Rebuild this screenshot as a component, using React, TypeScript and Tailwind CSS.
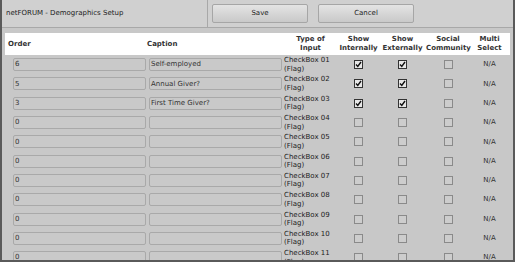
import React from 'react'

type Row = {
  order: string
  caption: string
  type: string
  internal: boolean
  external: boolean
}

const rows: Row[] = [
  { order: '6', caption: 'Self-employed', type: 'CheckBox 01', internal: true, external: true },
  { order: '5', caption: 'Annual Giver?', type: 'CheckBox 02', internal: true, external: true },
  { order: '3', caption: 'First Time Giver?', type: 'CheckBox 03', internal: true, external: true },
  { order: '0', caption: '', type: 'CheckBox 04', internal: false, external: false },
  { order: '0', caption: '', type: 'CheckBox 05', internal: false, external: false },
  { order: '0', caption: '', type: 'CheckBox 06', internal: false, external: false },
  { order: '0', caption: '', type: 'CheckBox 07', internal: false, external: false },
  { order: '0', caption: '', type: 'CheckBox 08', internal: false, external: false },
  { order: '0', caption: '', type: 'CheckBox 09', internal: false, external: false },
  { order: '0', caption: '', type: 'CheckBox 10', internal: false, external: false },
  { order: '0', caption: '', type: 'CheckBox 11', internal: false, external: false },
]

function Box({ checked }: { checked: boolean }) {
  if (checked) {
    return (
      <span className="flex h-[9px] w-[9px] items-center justify-center border border-[#333] bg-[#e8e8e8]">
        <svg width="7" height="7" viewBox="0 0 7 7">
          <path d="M1 3.5 L2.8 5.5 L6 1" fill="none" stroke="#111" strokeWidth="1.4" />
        </svg>
      </span>
    )
  }
  return <span className="block h-[9px] w-[9px] border border-[#8a8a8a] bg-[#cdcdcd]" />
}

function Field({ value }: { value: string }) {
  return (
    <div className="flex h-[13px] w-[133px] items-center rounded-[2px] border border-[#a9a9a9] bg-[#c9c9c9] pl-[1px] text-[7px] text-[#333]">
      {value}
    </div>
  )
}

export default function App() {
  return (
    <div
      className="h-[262px] w-[515px] overflow-hidden border-b-2 border-l-2 border-r-2 border-[#5a5a5a] bg-[#c8c8c8] text-[7px] text-[#222]"
      style={{ fontFamily: '"DejaVu Sans", Verdana, sans-serif' }}
    >
      <div className="flex h-[28px] items-center border-b border-[#a8a8a8] bg-[#d0d0d0]">
        <div className="flex h-full w-[206px] items-center border-r border-[#a8a8a8] pl-[4px] text-[#222]">
          netFORUM - Demographics Setup
        </div>
        <button className="ml-[4px] h-[19px] w-[96px] rounded-[2px] border border-[#a6a6a6] bg-gradient-to-b from-[#e4e4e4] to-[#c9c9c9] text-[7px] text-[#222]">
          Save
        </button>
        <button className="ml-[10px] h-[19px] w-[96px] rounded-[2px] border border-[#a6a6a6] bg-gradient-to-b from-[#e4e4e4] to-[#c9c9c9] text-[7px] text-[#222]">
          Cancel
        </button>
      </div>
      <div className="px-[3px] pt-[5px]">
        <div className="flex h-[22px] items-center bg-white font-bold leading-[9px] text-[#333]">
          <div className="w-[142px] shrink-0 pl-[3px]">Order</div>
          <div className="w-[136px] shrink-0">Caption</div>
          <div className="w-[55px] shrink-0 text-center">Type of<br />Input</div>
          <div className="w-[41px] shrink-0 text-center">Show<br />Internally</div>
          <div className="w-[47px] shrink-0 text-center">Show<br />Externally</div>
          <div className="w-[44px] shrink-0 text-center">Social<br />Community</div>
          <div className="w-[39px] shrink-0 text-center">Multi<br />Select</div>
        </div>
        {rows.map((r, i) => (
          <div key={i} className="flex h-[19.3px] items-center">
            <div className="w-[142px] shrink-0 pl-[8px]">
              <Field value={r.order} />
            </div>
            <div className="w-[136px] shrink-0 pl-[2px]">
              <Field value={r.caption} />
            </div>
            <div className="w-[55px] shrink-0 pl-[1px] leading-[8.5px] text-[#222]">
              {r.type}
              <br />
              (Flag)
            </div>
            <div className="flex w-[41px] shrink-0 justify-center">
              <Box checked={r.internal} />
            </div>
            <div className="flex w-[47px] shrink-0 justify-center">
              <Box checked={r.external} />
            </div>
            <div className="flex w-[44px] shrink-0 justify-center">
              <Box checked={false} />
            </div>
            <div className="w-[39px] shrink-0 text-center text-[#333]">N/A</div>
          </div>
        ))}
      </div>
    </div>
  )
}
